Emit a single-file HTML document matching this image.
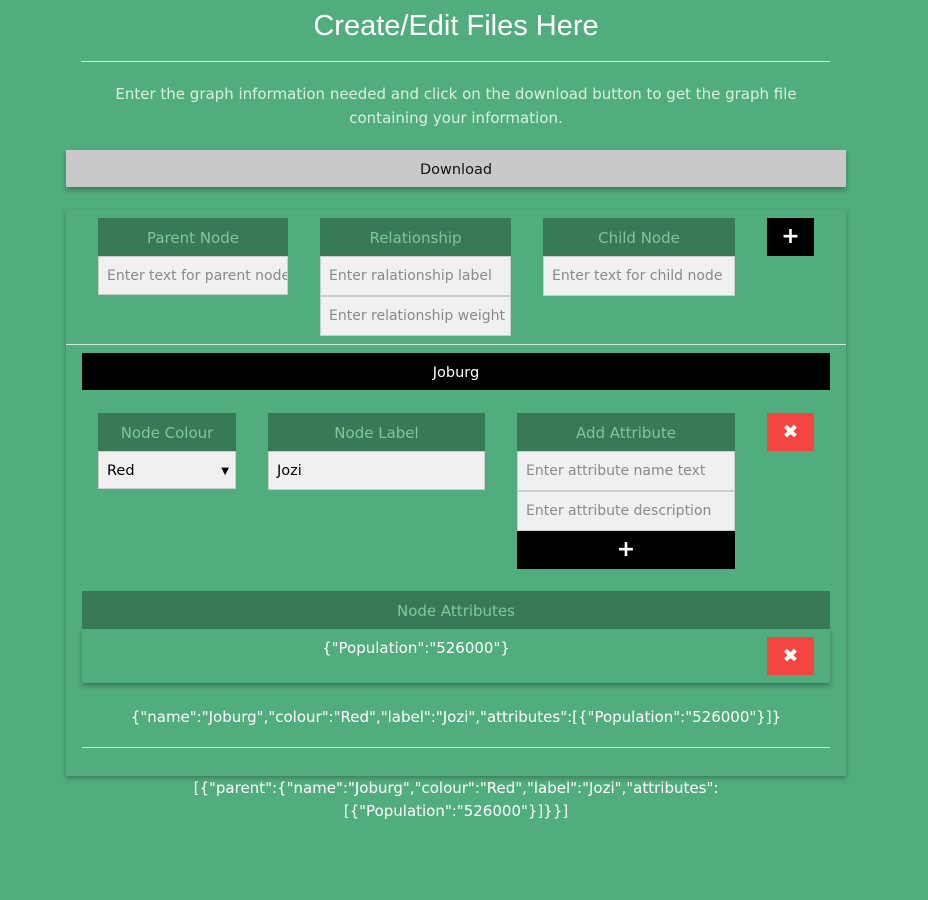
<!DOCTYPE html>
<html><head><style>
body{margin:0;width:928px;height:900px;background:#52ad7e;font-family:"DejaVu Sans","Liberation Sans",sans-serif;position:relative;overflow:hidden}
.a{position:absolute;box-sizing:border-box}
.t{color:#fff;text-align:center}
.h{background:#387a58;color:#80c69d;font-size:15px;text-align:center;line-height:40px}
.i{background:#f0f0f0;border:1px solid #ccc;color:#8a8a8a;font-size:14px;padding-left:8px;line-height:39px;white-space:nowrap;overflow:hidden}
.k{background:#000;color:#fff;text-align:center;font-weight:bold;font-size:22px;line-height:37px}
.r{background:#f44540;color:#fff;text-align:center;font-weight:bold;font-size:19px;line-height:38px}
</style></head><body>
<div class="a t" style="left:0;width:912px;top:6px;font-size:29px;line-height:40px;font-family:'Liberation Sans',sans-serif">Create/Edit Files Here</div>
<div class="a" style="left:81px;width:749px;top:61px;height:1px;background:#cfe9d9"></div>
<div class="a t" style="left:100px;width:712px;top:82px;font-size:15px;line-height:24px;color:#d8f2de">Enter the graph information needed and click on the download button to get the graph file containing your information.</div>
<div class="a" style="left:66px;width:780px;top:150px;height:37px;background:#c9c9c9;box-shadow:0 3px 5px rgba(0,0,0,.3);text-align:center;line-height:40px;font-size:14.5px;color:#111">Download</div>
<div class="a" style="left:66px;width:780px;top:210px;height:566px;box-shadow:0 2px 5px rgba(0,0,0,.3)"></div>
<div class="a" style="left:66px;width:780px;top:344px;height:1px;background:#cfe9d9"></div>
<div class="a h" style="left:98px;width:190px;top:218px;height:38px">Parent Node</div>
<div class="a i" style="left:98px;width:190px;top:256px;height:39px">Enter text for parent node</div>
<div class="a h" style="left:320px;width:191px;top:218px;height:38px">Relationship</div>
<div class="a i" style="left:320px;width:191px;top:256px;height:40px">Enter ralationship label</div>
<div class="a i" style="left:320px;width:191px;top:296px;height:40px">Enter relationship weight</div>
<div class="a h" style="left:543px;width:192px;top:218px;height:38px">Child Node</div>
<div class="a i" style="left:543px;width:192px;top:256px;height:40px">Enter text for child node</div>
<div class="a k" style="left:767px;width:47px;top:218px;height:38px">+</div>
<div class="a" style="left:82px;width:748px;top:353px;height:37px;background:#000;color:#fff;text-align:center;line-height:40px;font-size:14.5px">Joburg</div>
<div class="a h" style="left:98px;width:138px;top:413px;height:38px">Node Colour</div>
<div class="a i" style="left:98px;width:138px;top:451px;height:38px;color:#000;font-size:14.5px">Red<span style="position:absolute;right:6px;font-size:10px">▼</span></div>
<div class="a h" style="left:268px;width:217px;top:413px;height:38px">Node Label</div>
<div class="a i" style="left:268px;width:217px;top:451px;height:39px;color:#000;font-size:14.5px">Jozi</div>
<div class="a h" style="left:517px;width:218px;top:413px;height:38px">Add Attribute</div>
<div class="a i" style="left:517px;width:218px;top:451px;height:40px">Enter attribute name text</div>
<div class="a i" style="left:517px;width:218px;top:491px;height:40px">Enter attribute description</div>
<div class="a k" style="left:517px;width:218px;top:531px;height:38px">+</div>
<div class="a r" style="left:767px;width:47px;top:413px;height:38px">✖</div>
<div class="a h" style="left:82px;width:748px;top:591px;height:38px">Node Attributes</div>
<div class="a" style="left:82px;width:748px;top:629px;height:54px;box-shadow:0 3px 5px rgba(0,0,0,.3)"></div>
<div class="a t" style="left:82px;width:668px;top:638px;font-size:15px;line-height:20px">{"Population":"526000"}</div>
<div class="a r" style="left:767px;width:47px;top:637px;height:38px">✖</div>
<div class="a t" style="left:46px;width:820px;top:707px;font-size:15px;line-height:20px">{"name":"Joburg","colour":"Red","label":"Jozi","attributes":[{"Population":"526000"}]}</div>
<div class="a" style="left:82px;width:748px;top:747px;height:1px;background:#cfe9d9"></div>
<div class="a t" style="left:150px;width:612px;top:777px;font-size:15px;line-height:23px">[{"parent":{"name":"Joburg","colour":"Red","label":"Jozi","attributes":<br>[{"Population":"526000"}]}}]</div>
</body></html>
